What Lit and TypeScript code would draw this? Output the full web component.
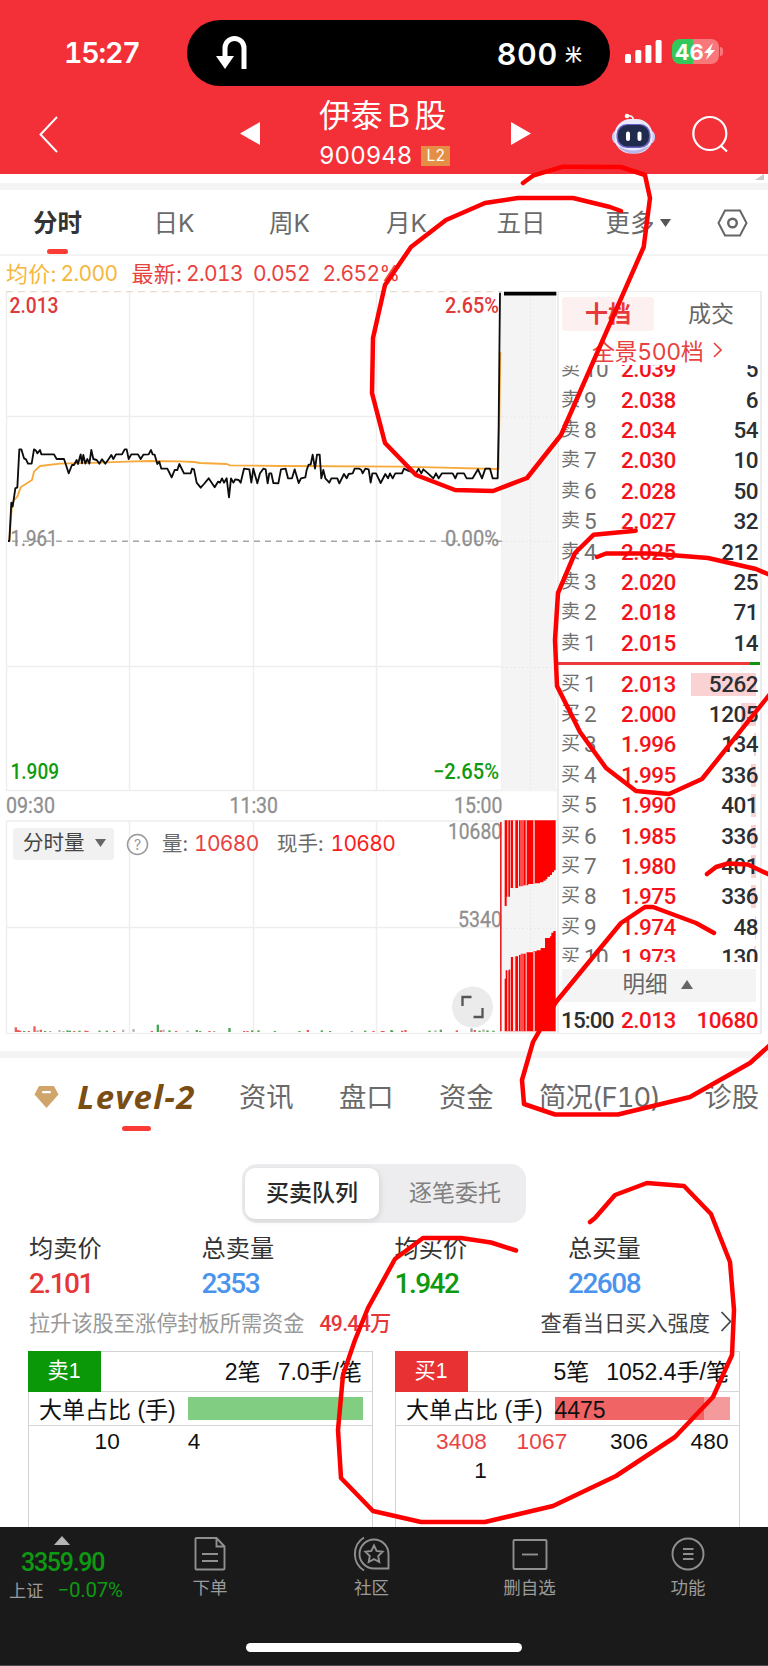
import { LitElement, html, svg, css } from "lit";
import { customElement } from "lit/decorators.js";

type Level = { side: string; n: number; price: string; vol: number };

const asks: Level[] = [
  ["2.039", 5], ["2.038", 6], ["2.034", 54], ["2.030", 10], ["2.028", 50],
  ["2.027", 32], ["2.025", 212], ["2.020", 25], ["2.018", 71], ["2.015", 14],
].map(([p, v], i) => ({ side: "卖", n: 10 - i, price: String(p), vol: Number(v) }));

const bids: Level[] = [
  ["2.013", 5262], ["2.000", 1205], ["1.996", 134], ["1.995", 336], ["1.990", 401],
  ["1.985", 336], ["1.980", 401], ["1.975", 336], ["1.974", 48], ["1.973", 130],
].map(([p, v], i) => ({ side: "买", n: i + 1, price: String(p), vol: Number(v) }));

const base = css`
  :host { display: block; box-sizing: border-box; }
  * { box-sizing: border-box; }
  svg { display: block; flex: none; }
  .din { font-family: Roboto, "Noto Sans CJK SC", sans-serif; }
  .sf { font-family: Inter, "Noto Sans CJK SC", sans-serif; font-variant-numeric: tabular-nums; }
`;

@customElement("app-header")
class AppHeader extends LitElement {
  static styles = [base, css`
    :host { height: 174px; background: #f33038; color: #fff; }
    .status { display: flex; height: 100px; padding: 20px 0 0 64px; }
    .time { width: 123px; line-height: 66px; font-size: 28.5px; font-weight: 600; letter-spacing: -1.2px; }
    .island { width: 423px; height: 66px; border-radius: 33px; background: #000; display: flex; align-items: center; padding: 0 28px 0 29px; }
    .dist { margin-left: auto; font-size: 30.5px; font-weight: 600; letter-spacing: 0.7px; }
    .unit { font-size: 17px; font-weight: 500; margin-left: 7px; }
    .signal { margin: 20px 0 0 15px; }
    .battery { position: relative; margin: 19px 0 0 10px; width: 47px; height: 25px; border-radius: 8px; background: linear-gradient(90deg, #34c759 0 21px, #f8777b 21px); display: flex; align-items: center; padding-left: 3px; font-size: 22px; font-weight: 700; letter-spacing: 0.2px; }
    .nub { position: absolute; left: 48px; top: 8px; width: 3px; height: 9px; border-radius: 0 4px 4px 0; background: #f8777b; }
    .bar { display: flex; height: 74px; }
    .back { margin: 16px 182px 0 39px; }
    .tri { margin-top: 22px; }
    .names { width: 251px; padding-left: 59px; }
    .name { font-size: 31.8px; line-height: 32px; letter-spacing: 0; white-space: nowrap; }
    .code { display: flex; align-items: center; font-size: 24px; line-height: 24px; margin-top: 12px; }
    .l2 { margin-left: 9px; width: 29px; height: 20px; background: #e58e45; font-size: 15.5px; line-height: 20px; text-align: center; }
    .robot { margin: 13px 0 0 81px; }
    .search { margin: 15px 0 0 37px; }
  `];
  render() {
    return html`
      <div class="status sf">
        <div class="time">15:27</div>
        <div class="island">
          <svg width="31" height="36" viewBox="0 0 31 36"><path d="M28 34V13a9.5 9.5 0 0 0-19 0v9" fill="none" stroke="#fff" stroke-width="5"/><path d="M0 21h18L9 34z" fill="#fff"/></svg>
          <span class="dist">800</span><span class="unit">米</span>
        </div>
        <svg class="signal" width="37" height="23" viewBox="0 0 37 23" fill="#fff">
          <rect y="14" width="6" height="9" rx="1.5"/><rect x="10.3" y="10" width="6" height="13" rx="1.5"/><rect x="20.4" y="5" width="6" height="18" rx="1.5"/><rect x="30.6" width="6" height="23" rx="1.5"/>
        </svg>
        <div class="battery">46<svg width="11" height="17" viewBox="0 0 11 17"><path d="M9 0 0 10h4.5L2 17 11 7H6.5z" fill="#fff"/></svg><i class="nub"></i></div>
      </div>
      <div class="bar">
        <svg class="back" width="19" height="37" viewBox="0 0 19 37"><path d="M18 1 1.5 18.5 18 36" fill="none" stroke="#fff" stroke-width="2"/></svg>
        <svg class="tri" width="20" height="23" viewBox="0 0 20 23"><path d="M20 0v23L0 11.5z" fill="#fff"/></svg>
        <div class="names sf"><div class="name">伊泰Ｂ股</div><div class="code">900948<span class="l2">L2</span></div></div>
        <svg class="tri" width="20" height="23" viewBox="0 0 20 23"><path d="M0 0v23l20-11.5z" fill="#fff"/></svg>
        <svg class="robot" width="43" height="41" viewBox="0 0 43 41">
          <path d="M15 3q6-1 6.500 4" fill="none" stroke="#fff" stroke-width="1.500"/><circle cx="15" cy="3" r="2.300" fill="#fff"/>
          <rect x="0" y="17" width="43" height="14" rx="6" fill="#c9c9f3"/><rect x="2.500" y="6" width="38" height="34.500" rx="16" fill="#e8e9fb"/>
          <path d="M5 32q16 11 33 0-6 8.500-16.500 8.500T5 32" fill="#b9b5ec"/>
          <rect x="4.500" y="11" width="34" height="24" rx="10.500" fill="#6a61c8"/><rect x="6" y="12" width="31" height="21.500" rx="9.500" fill="#1f2a4d"/>
          <rect x="14" y="18.500" width="4" height="9.500" rx="2" fill="#fff"/><rect x="25.500" y="18.500" width="4" height="9.500" rx="2" fill="#fff"/>
        </svg>
        <svg class="search" width="36" height="38" viewBox="0 0 36 38" fill="none" stroke="#fff" stroke-width="2.200"><circle cx="17.800" cy="18.500" r="16.500"/><path d="M28.500 30.500 35 36.500"/></svg>
      </div>`;
  }
}

@customElement("period-tabs")
class PeriodTabs extends LitElement {
  static styles = [base, css`
    :host { height: 117px; }
    .gap { height: 16px; border-bottom: 7px solid #f4f4f4; display: flex; justify-content: flex-end; padding-right: 4px; }
    .tabs { display: grid; grid-template-columns: 120.5px 115.5px 117px 110.5px 109px 111px 40px; padding-left: 33px; height: 66px; border-bottom: 2px solid #f3f3f3; font-size: 24.500px; line-height: 66.5px; color: #6a6a6a; }
    .tab { white-space: nowrap; }
    .on { color: #333; font-weight: 700; display: grid; grid-template-rows: 59px 5px; width: 49px; justify-items: center; line-height: 66.5px; margin-right: auto; }
    .on i { width: 21px; height: 5px; border-radius: 3px; background: #fb3b35; }
    .more { display: flex; align-items: center; gap: 5px; }
    .gear { margin-top: 19px; }
    .legend { display: flex; height: 35px; line-height: 36px; font-size: 21px; color: #e8423f; white-space: pre; padding-left: 6px; }
    .legend span { letter-spacing: -0.600px; }
    .legend .zh { font-size: 22px; letter-spacing: 0.300px; width: 54.500px; }
    .avg { color: #f6b73c; width: 71px; }
    .legend .zh.a { color: #f6b73c; }
    .last { width: 67px; } .chg { width: 69.500px; }
  `];
  render() {
    return html`
      <div class="gap"><svg width="9" height="6" viewBox="0 0 9 6"><path d="M9 0v6H0z" fill="#c9c9c9"/></svg></div>
      <div class="tabs sf">
        <div class="on">分时<i></i></div><div class="tab">日K</div><div class="tab">周K</div><div class="tab">月K</div><div class="tab">五日</div>
        <div class="tab more">更多<svg width="11" height="8" viewBox="0 0 11 8"><path d="M0 0h11L5.500 8z" fill="#555"/></svg></div>
        <svg class="gear" width="31" height="28" viewBox="0 0 31 28" fill="none" stroke="#666"><path d="M8 1.500h15L29.500 14 23 26.500H8L1.500 14z" stroke-width="2"/><circle cx="15.500" cy="14" r="4.300" stroke-width="2.400"/></svg>
      </div>
      <div class="legend sf"><span class="zh a">均价: </span><span class="avg">2.000</span><span class="zh">最新: </span><span class="last">2.013</span><span class="chg">0.052</span><span>2.652%</span></div>`;
  }
}

const pricePts = "24,1143 28,1143 34,1028 38,1040 46,985 52,982 58,868 64,868 72,895 78,898 84,911 95,911 102,868 108,872 112,880 120,870 124,883 162,883 170,897 192,897 198,915 206,940 216,915 222,915 230,900 234,912 242,883 246,910 250,885 256,911 262,897 268,911 274,870 280,897 290,900 298,911 306,898 316,911 326,897 334,885 340,897 348,883 366,883 374,868 380,868 386,897 394,883 414,883 422,897 430,884 446,883 453,870 458,883 464,884 472,912 478,905 484,926 502,926 515,952 524,930 532,930 538,912 552,940 572,940 576,926 582,928 590,968 602,983 612,972 626,955 644,982 654,965 660,968 666,955 672,968 680,955 687,1012 693,955 700,968 706,958 716,960 722,968 732,926 748,928 754,968 760,926 772,970 780,940 790,926 797,928 803,970 808,940 814,940 820,969 835,970 843,928 857,926 864,955 876,955 884,928 896,969 903,955 916,952 920,930 926,914 932,914 938,884 945,926 951,884 959,884 964,955 970,930 976,955 988,968 994,955 1012,955 1018,970 1032,942 1040,955 1046,942 1058,940 1064,926 1078,926 1084,930 1088,940 1096,926 1106,928 1112,968 1117,940 1128,940 1142,969 1156,942 1164,955 1170,940 1178,955 1186,940 1206,940 1212,926 1224,932 1248,940 1256,926 1264,940 1270,928 1284,940 1300,955 1308,940 1316,955 1326,940 1358,940 1366,955 1372,940 1392,940 1400,955 1418,955 1434,928 1446,955 1456,926 1470,926 1478,955 1493,955 1496,800 1500,398";
const avgPts = "28,1143 36,1035 42,1020 52,1010 62,982 96,960 102,935 120,918 180,911 300,908 380,905 450,903 540,904 582,906 600,909 680,912 690,916 850,918 1200,920 1330,923 1490,927 1496,927 1501,577";
const ticks: [number, number, string][] = [
  [47, 14, "#e8423f"], [54, 6, "#e8423f"], [60, 4, "#e8423f"], [72, 3, "#3a9b3a"], [86, 3, "#e8423f"], [103, 17, "#e8423f"], [112, 5, "#999"], [122, 7, "#e8423f"], [135, 3, "#3a9b3a"], [150, 3, "#999"],
  [178, 6, "#aaa"], [190, 3, "#aaa"], [202, 5, "#3a9b3a"], [209, 4, "#3a9b3a"], [222, 3, "#e8423f"], [238, 4, "#3a9b3a"], [256, 4, "#e8423f"], [262, 3, "#e8423f"], [298, 4, "#3a9b3a"], [320, 4, "#3a9b3a"], [342, 3, "#e8423f"], [369, 7, "#aaa"], [400, 9, "#aaa"],
  [455, 3, "#e8423f"], [473, 22, "#24963a"], [482, 5, "#e8423f"], [490, 7, "#aaa"], [508, 5, "#3a9b3a"], [528, 3, "#e8423f"], [562, 4, "#aaa"], [590, 6, "#3a9b3a"], [600, 3, "#3a9b3a"], [628, 3, "#e8423f"], [642, 3, "#999"], [688, 12, "#24963a"], [732, 3, "#e8423f"], [742, 3, "#e8423f"], [756, 5, "#3a9b3a"], [775, 5, "#3a9b3a"], [824, 3, "#3a9b3a"], [898, 3, "#3a9b3a"], [923, 6, "#e8423f"], [965, 5, "#3a9b3a"], [990, 3, "#3a9b3a"], [1055, 3, "#999"], [1095, 4, "#3a9b3a"], [1150, 3, "#e8423f"], [1176, 3, "#3a9b3a"],
  [1120, 3, "#e8423f"], [1145, 3, "#e8423f"], [1174, 6, "#3a9b3a"], [1206, 4, "#e8423f"], [1216, 6, "#e8423f"], [1288, 4, "#3a9b3a"], [1306, 5, "#aaa"], [1322, 7, "#3a9b3a"], [1370, 5, "#e8423f"], [1414, 11, "#888"], [1424, 6, "#e8423f"], [1438, 4, "#3a9b3a"], [1450, 8, "#aaa"], [1462, 5, "#3a9b3a"], [1480, 4, "#3a9b3a"],
];

@customElement("time-chart")
class TimeChart extends LitElement {
  static styles = [base, css`
    :host { display: block; position: relative; width: 557px; height: 743px; }
    .num { font: 500 21.500px Roboto, sans-serif; }
    .axis { fill: #8f8f8f; font-weight: 400; stroke: #8f8f8f; stroke-width: 0.300px; }
    .tools { position: absolute; left: 13px; top: 536px; display: flex; align-items: center; height: 34px; font-size: 20.500px; line-height: 30px; color: #6a6a6a; white-space: nowrap; }
    .pill { width: 101px; height: 32px; border-radius: 3px; background: #f1f1f1; color: #444; display: flex; align-items: center; justify-content: space-between; padding: 0 8px 2px 10px; }
    .help { margin: 0 13px 0 12px; }
    .q { font: 14px Inter, sans-serif; fill: #999; }
    .num2 { font-size: 21px; letter-spacing: -0.700px; color: #e8423f; width: 83px; margin-left: 7px; }
    .hot { color: #fb1d1d; }
    .qty { width: 25px; }
  `];
  render() {
    const V = [129.5, 253.5, 376.5];
    return html`
      <svg width="557" height="743" viewBox="0 291 557 743">
        <g stroke="#eeeeee" stroke-width="1.500" fill="none">
          <path d="M6.500 291.500V791M502 291V791M6 790.500H557M6 416.500H502M6 666.500H502M6 821H557M6 927.500H502M6 1033.500H557M6.500 821V1034"/>
          ${V.map((x) => svg`<path d=${`M${x} 291V790M${x} 821V1034`}/>`)}
        </g>
        <rect x="502" y="291" width="54" height="500" fill="#f4f4f4"/><rect x="502" y="821" width="54" height="212" fill="#f4f4f4"/>
        <path d="M530.500 291V790M530.500 821V1033M502 417H556M502 541.500H556M502 667.500H556M502 928.500H556" stroke="#e9e9e9" stroke-dasharray="2 2"/>
        <path d="M6 291.500H502" stroke="#e6dccb" stroke-width="1.500" stroke-dasharray="7 5"/>
        <path d="M12 541.300H502" stroke="#a5a5a5" stroke-width="1.400" stroke-dasharray="6 5"/>
        <g class="num">
          <text x="9.500" y="312.500" fill="#e0393a" textLength="49" lengthAdjust="spacingAndGlyphs">2.013</text>
          <text x="445" y="312.500" fill="#e0393a" textLength="54" lengthAdjust="spacingAndGlyphs">2.65%</text>
          <text class="axis" x="10.500" y="546" textLength="47" lengthAdjust="spacingAndGlyphs">1.961</text>
          <text class="axis" x="445" y="546" textLength="54" lengthAdjust="spacingAndGlyphs">0.00%</text>
          <text x="10.500" y="779" fill="#109a10" textLength="48.500" lengthAdjust="spacingAndGlyphs">1.909</text>
          <text x="433" y="779" fill="#109a10" textLength="66" lengthAdjust="spacingAndGlyphs">−2.65%</text>
          <text class="axis" x="6" y="812.800" textLength="49" lengthAdjust="spacingAndGlyphs">09:30</text>
          <text class="axis" x="229.500" y="812.800" textLength="48.500" lengthAdjust="spacingAndGlyphs">11:30</text>
          <text class="axis" x="454" y="812.800" textLength="48.500" lengthAdjust="spacingAndGlyphs">15:00</text>
          <text class="axis" x="448" y="838.800" textLength="54" lengthAdjust="spacingAndGlyphs">10680</text>
          <text class="axis" x="458" y="926.500" textLength="44" lengthAdjust="spacingAndGlyphs">5340</text>
        </g>
        <g transform="translate(0 160) scale(.33333)" fill="none" stroke-linejoin="round">
          <polyline points=${avgPts} stroke="#f7a93b" stroke-width="5.500"/>
          <polyline points=${pricePts} stroke="#0d0d0d" stroke-width="5.500"/>
          <path d="M1512 401H1669" stroke="#000" stroke-width="11"/>
        </g>
        <g transform="translate(0 760) scale(.33333)">
          ${ticks.map(([x, h, c]) => svg`<rect x=${x - 3} y=${816 - h} width="7" height=${h} fill=${c} opacity=".85"/>`)}
        </g>
        <g transform="translate(490 810) scale(.33333)">
          <rect x="30" y="36" width="5" height="628" fill="#e8262a"/>
          <path fill="#f00" d="M44 31H197V181H192V187H186V195H180V200H172V208H167V212H160V217H150V220H135V222H115V226H100V229H84V234H60V260H50V288H44z"/>
          <path fill="#f00" d="M44 664V506H47V481H58V478H62V441H69V439H84V435H92V431H108V427H130V424H140V421H152V414H165V384H180V379H184V368H190V363H197V664z"/>
          <g fill="#fbe4e4"><path d="M69 31h7v206h-7zM69 438h7v226h-7zM52 31h3v230h-3zM52 480h3v184h-3zM60 31h2v206h-2zM60 440h2v224h-2zM84 31h3v203h-3zM84 435h3v229h-3zM92 31h2v200h-2zM92 431h2v233h-2zM98 31h2v200h-2zM98 431h2v233h-2zM107 31h3v196h-3zM107 427h3v237h-3zM130 31h4v192h-4zM130 425h4v239h-4z"/></g>
        </g>
        <circle cx="472.500" cy="1007" r="20.500" fill="#ebebeb"/><path d="M462.500 1006v-9h9M482.500 1008v9h-9" fill="none" stroke="#555" stroke-width="2.300"/>
      </svg>
      <div class="tools sf">
        <div class="pill">分时量<svg width="11" height="8" viewBox="0 0 11 8"><path d="M0 0h11L5.500 8z" fill="#666"/></svg></div>
        <svg class="help" width="23" height="23" viewBox="0 0 23 23"><circle cx="11.500" cy="11.500" r="10" fill="none" stroke="#999" stroke-width="1.500"/><text class="q" x="11.500" y="16.500" text-anchor="middle">?</text></svg>
        <span class="qty">量:</span><span class="num2">10680</span><span>现手:</span><span class="num2 hot">10680</span>
      </div>`;
  }
}

@customElement("order-book")
class OrderBook extends LitElement {
  static styles = [base, css`
    :host { width: 205px; height: 743px; border: 1px solid #ececec; border-width: 1px 2px; }
    .tabs { display: flex; margin: 5px 0 0 3px; font-size: 23px; line-height: 34px; text-align: center; color: #666; }
    .tabs div { width: 92px; height: 34px; border-radius: 3px; }
    .tabs .on { background: #fdf0f0; color: #e8393a; font-weight: 700; }
    .tabs .off { margin-left: 9px; width: 96px; }
    .all { display: flex; align-items: center; height: 34px; gap: 10px; padding: 3px 0 0 33px; white-space: nowrap; color: #e8423f; font-size: 23px; letter-spacing: -0.400px; }
    .asks { height: 297px; overflow: hidden; display: flex; flex-direction: column; justify-content: flex-end; padding-bottom: 4px; }
    .bids { height: 296.500px; overflow: hidden; padding-top: 3.500px; }
    .split { height: 3px; background: linear-gradient(90deg, #ea3a3c 0 193px, #10920f 193px); margin: 0 0 0 -2px; }
    .row { flex: none; height: 30.400px; display: grid; grid-template-columns: 23px 37px 59px 1fr; align-items: center; padding: 0 2px 0 2px; font-size: 22.500px; line-height: 30px; letter-spacing: -0.500px; font-weight: 500; }
    .side { font-size: 19px; color: #707070; font-weight: 400; }
    .n { color: #707070; font-weight: 400; letter-spacing: -0.600px; }
    .price { color: #f5121b; }
    .vol { position: relative; text-align: right; color: #2b2f33; }
    .fill { position: absolute; right: 2.500px; top: 4px; height: 23px; background: #fad2d4; }
    .v { position: relative; }
    .more { margin: 7px 0 0 3px; width: 194px; height: 33px; background: #f4f4f4; display: flex; align-items: center; justify-content: center; gap: 13px; color: #666; font-size: 22.500px; line-height: 30px; padding: 0 3px 2px 0; }
    .deal { display: grid; grid-template-columns: 60px 59px 1fr; padding: 0 2px 0 2px; height: 37px; line-height: 37px; font-size: 22.500px; font-weight: 500; letter-spacing: -0.500px; color: #2b2f33; }
    .clock { letter-spacing: -0.900px; }
    .deal .r { text-align: right; } .red { color: #f5121b; }
  `];
  row(l: Level) {
    const w = (l.vol / 5262) * 65;
    return html`<div class="row din"><span class="side">${l.side}</span><span class="n">${l.n}</span><span class="price">${l.price}</span>
      <span class="vol">${l.side === "买" ? html`<i class="fill" style=${`width:${w}px`}></i>` : null}<span class="v">${l.vol}</span></span></div>`;
  }
  render() {
    return html`
      <div class="tabs sf"><div class="on">十档</div><div class="off">成交</div></div>
      <div class="all sf">全景500档<svg width="9" height="16" viewBox="0 0 9 16"><path d="M1 1l7 7-7 7" fill="none" stroke="#e8423f" stroke-width="1.600"/></svg></div>
      <div class="asks">${asks.map((l) => this.row(l))}</div>
      <div class="split"></div>
      <div class="bids">${bids.map((l) => this.row(l))}</div>
      <div class="more sf">明细<svg width="12" height="9" viewBox="0 0 12 9"><path d="M0 9h12L6 0z" fill="#666"/></svg></div>
      <div class="deal din"><span class="clock">15:00</span><span class="red">2.013</span><span class="red r">10680</span></div>`;
  }
}

@customElement("level-two")
class LevelTwo extends LitElement {
  static styles = [base, css`
    :host { height: 493px; overflow: hidden; color: #333; }
    .gap { height: 24px; border: solid #f4f4f4; border-width: 0 0 7px; }
    .nav { display: grid; grid-template-columns: 37px 168px 100px 100px 100px 165.500px 1fr; padding-left: 34px; height: 76px; align-items: start; font-size: 27.300px; line-height: 79.500px; color: #6a6a6a; white-space: nowrap; overflow: hidden; }
    .gem { margin-top: 28px; }
    .lv { font: italic 700 33px/78px "Open Sans", sans-serif; color: #7a4d12; letter-spacing: 1.300px; height: 73px; display: grid; grid-template-rows: 68px 5px; width: 131px; justify-items: center; }
    .lv i { width: 29px; height: 5px; border-radius: 3px; background: #fb3b35; }
    .f10 { letter-spacing: -0.900px; }
    .seg { margin: 30px 0 0 242px; width: 284px; height: 59px; border-radius: 15px; background: #ededef; padding: 4px 3px; display: flex; font-size: 23px; line-height: 51px; text-align: center; color: #808080; }
    .seg div { flex: none; }
    .seg .on { width: 134px; border-radius: 10px; background: #fff; color: #2a2a2a; font-weight: 500; box-shadow: 1px 2px 6px #0000001c; }
    .seg .off { width: 152px; }
    .stats { display: grid; grid-template-columns: 172.500px 193px 173.500px 1fr; padding: 9.500px 0 0 29px; font-size: 24.200px; line-height: 33px; height: 79px; }
    .val { font-size: 28px; line-height: 35px; font-weight: 500; letter-spacing: -1.500px; color: #e53738; }
    .blue { color: #4a94ee; } .green { color: #0f9a0e; }
    .hint { display: flex; align-items: center; height: 49px; padding: 0 36px 10px 29px; font-size: 21.200px; color: #999; white-space: nowrap; }
    .amt { margin-left: 15px; color: #e53738; font-weight: 500; letter-spacing: -0.700px; }
    .strength { margin-left: auto; color: #444; display: flex; align-items: center; gap: 10px; }
    .cards { display: flex; gap: 22px; padding-left: 28px; }
    .card { width: 345px; height: 190px; border: 1px solid #d3d3d3; border-width: 1.500px; color: #111; font-family: "Liberation Sans", "Noto Sans CJK SC", sans-serif; font-size: 23px; }
    .head { display: flex; height: 40px; line-height: 40px; border-bottom: 1.500px solid #d6d6d6; }
    .tag { width: 73px; height: 41px; text-align: center; color: #fff; font-size: 21.200px; background: #0b9808; margin: -1px 0 0 -1px; padding-right: 1px; }
    .tag.buy { background: #e83133; }
    .cnt { margin-left: auto; } .per { margin: 0 10px 0 17px; }
    .big { display: flex; height: 34px; line-height: 37px; border-bottom: 1.500px solid #d6d6d6; padding-left: 10px; font-size: 23px; white-space: nowrap; }
    .lab { width: 148.500px; }
    .meter { width: 175px; height: 23px; margin-top: 5px; background: #81cd81; }
    .meter.buy { background: linear-gradient(90deg, #f06466 0 149.500px, #f59a9c 149.500px); line-height: 26px; }
    .grid { display: grid; grid-template-columns: 91px 80.500px 80.700px 80.700px; text-align: right; line-height: 28.500px; padding-top: 2px; font-size: 22.600px; letter-spacing: 0.200px; }
    .grid .r { color: #ea4344; }
  `];
  card(tag: string, cls: string, cnt: string, per: string, big: string, nums: string[], red: number) {
    return html`<div class="card">
      <div class="head"><span class="tag ${cls}">${tag}</span><span class="cnt">${cnt}</span><span class="per">${per}</span></div>
      <div class="big"><span class="lab">大单占比 (手)</span><span class="meter ${cls}">${big}</span></div>
      <div class="grid">${nums.map((n, i) => html`<span class=${i < red ? "r" : ""}>${n}</span>`)}</div>
    </div>`;
  }
  render() {
    return html`
      <div class="gap"></div>
      <div class="nav sf">
        <svg class="gem" width="25" height="22" viewBox="0 0 25 22"><path d="M5 0h15l4.500 8.500L12.500 22 .5 8.500z" fill="#d0a56c"/><rect x="8" y="5" width="9" height="2.200" rx="1" fill="#fff"/></svg>
        <div class="lv">Level-2<i></i></div><span>资讯</span><span>盘口</span><span>资金</span><span class="f10">简况(F10)</span><span>诊股</span>
      </div>
      <div class="seg sf"><div class="on">买卖队列</div><div class="off">逐笔委托</div></div>
      <div class="stats din">
        <div>均卖价<div class="val">2.101</div></div><div>总卖量<div class="val blue">2353</div></div>
        <div>均买价<div class="val green">1.942</div></div><div>总买量<div class="val blue">22608</div></div>
      </div>
      <div class="hint din">拉升该股至涨停封板所需资金<span class="amt">49.44万</span>
        <span class="strength">查看当日买入强度<svg width="12" height="21" viewBox="0 0 12 21"><path d="M1.500 1 10.500 10.500l-9 9.500" fill="none" stroke="#444" stroke-width="1.700"/></svg></span></div>
      <div class="cards">
        ${this.card("卖1", "", "2笔", "7.0手/笔", "", ["10", "4"], 0)}
        ${this.card("买1", "buy", "5笔", "1052.4手/笔", "4475", ["3408", "1067", "306", "480", "1"], 2)}
      </div>`;
  }
}

@customElement("bottom-bar")
class BottomBar extends LitElement {
  static styles = [base, css`
    :host { height: 139px; background: #1a1a1a; color: #9b9b9b; border-bottom: 1px solid #4a4a4a; }
    .items { display: grid; grid-template-columns: 150px 120px 203px 113px 204px; height: 116px; }
    .index { padding-top: 9px; }
    .up { margin-left: 54px; }
    .pts { font: 500 25px/32px Roboto, sans-serif; letter-spacing: -1.300px; color: #0d9a12; padding-left: 21px; margin-top: 2px; }
    .sub { display: flex; align-items: baseline; gap: 14px; padding-left: 9px; font-size: 17.200px; line-height: 22px; }
    .pct { color: #0d9a12; font-size: 20.500px; letter-spacing: -0.200px; }
    .item { display: flex; flex-direction: column; align-items: center; padding-top: 9px; font-size: 17.500px; line-height: 26px; gap: 3px; }
    .home { width: 276px; height: 9px; margin-left: 246px; border-radius: 5px; background: #fff; }
  `];
  item(label: string, icon: unknown) {
    return html`<div class="item sf"><svg width="38" height="36" viewBox="0 0 38 36" fill="none" stroke="#8f8f8f" stroke-width="1.900">${icon}</svg>${label}</div>`;
  }
  render() {
    return html`<div class="items">
        <div class="index din"><svg class="up" width="16" height="9" viewBox="0 0 16 9"><path d="M0 9h16L8 0z" fill="#b5b5b5"/></svg>
          <div class="pts">3359.90</div><div class="sub">上证<span class="pct">−0.07%</span></div></div>
        ${this.item("下单", svg`<path d="M25.500 2H5.500a1 1 0 0 0-1 1v29.500a1 1 0 0 0 1 1h27a1 1 0 0 0 1-1V10.500zM25.500 2v8.500h8M11 18h16M11 25h16"/>`)}
        ${this.item("社区", svg`<path d="M21 3.500a14.500 14.500 0 1 0 0 29h14.500V18A14.500 14.500 0 0 0 21 3.500M11 1.500a19.500 19.500 0 0 0 0 33M21 9.500l2.600 5.500 6 .8-4.400 4.200 1.100 6-5.300-2.900-5.300 2.900 1.100-6-4.400-4.200 6-.8z"/>`)}
        ${this.item("删自选", svg`<rect x="2.500" y="4" width="33" height="29" rx="1"/><path d="M11 18.500h16"/>`)}
        ${this.item("功能", svg`<circle cx="19" cy="18" r="15.500"/><path d="M14 13h10.500M14 18h10.500M14 23h10.500"/>`)}
      </div><div class="home"></div>`;
  }
}

@customElement("app-root")
class AppRoot extends LitElement {
  static styles = [base, css`
    :host { position: relative; width: 768px; height: 1666px; overflow: hidden; background: #fff; }
    .market { display: flex; height: 743px; }
    .marks { position: absolute; left: 0; top: 0; }
  `];
  render() {
    return html`
      <app-header></app-header><period-tabs></period-tabs>
      <div class="market"><time-chart></time-chart><order-book></order-book></div>
      <level-two></level-two><bottom-bar></bottom-bar>
      <svg class="marks" width="768" height="1666" viewBox="0 0 768 1666" fill="none" stroke="#fe0000" stroke-width="4.500" stroke-linecap="round" stroke-linejoin="round">
        <path d="M523 183L533 175.700L563 166.700L621 167L645 175L650 198L643.700 247L561 435L527 478L493 491L455 490L416 475L385 443L372 393L373 338L385 285L411 247L446 220L485 203L518 198H573L610 207L621 211"/>
        <path d="M635.700 530.700L593.700 534.700L575 553L558 593L555 640L557 686L580 732L606 768L636 791L669 794L702 779L770 694M597 557L606 553.500H651L708 558L756 569L770 575"/>
        <path d="M707 874L716 867L728 863.500L748 864.500L770 875M714 933L696 923L653 907H645L621 923L556 1002L533 1042L522 1080L524 1104L555 1114.500H618L690 1097L750 1063L770 1045"/>
        <path d="M590 1222L595 1218L615 1195L647 1183L684 1186L711 1214L730 1262L734 1310L732 1355L713 1397L675 1437L616 1476L553 1506L485 1522H421L373 1511L341 1478L338 1430L343 1375L355 1340L368 1308L395 1259L423 1238H461L491 1242.500L516 1250.500"/>
      </svg>`;
  }
}
